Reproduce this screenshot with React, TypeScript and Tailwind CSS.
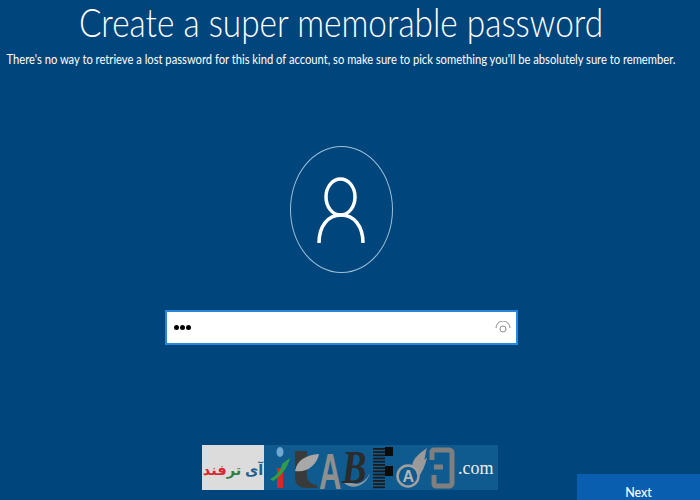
const barcodeRows = [0, 1, 2, 3, 4, 5, 6, 7, 8, 9, 10, 11, 12];

function Logo() {
  return (
    <div className="flex h-[45px] w-[296px] items-stretch bg-[#0f5a8e]">
      <div className="flex w-[62px] shrink-0 items-center justify-center bg-[#dcdcdc] pt-1 font-['Noto_Sans','DejaVu_Sans',sans-serif] text-[14.5px] leading-none font-bold whitespace-nowrap">
        <span dir="rtl">
          <span className="text-[#1f5f8f]">آی </span>
          <span className="text-[#2f7f3f]">تر</span>
          <span className="text-[#d8262c]">فند</span>
        </span>
      </div>
      <svg width="194" height="45" viewBox="0 0 194 45" className="shrink-0">
        {/* person mark */}
        <ellipse cx="16" cy="7" rx="3.5" ry="5" fill="#6fa8d0" />
        <path d="M13 23h6v20h-6z" fill="#d8262c" />
        <path d="M6 34c6-3 11-8 12-15l8-6c-2 9-8 17-17 23z" fill="#2f9e4a" />
        {/* leaf and stem */}
        <path d="M31 6h12v25c0 5 3 8 10 9v3H42c-7 0-11-4-11-11z" fill="#3a3a3a" />
        <path d="M31 26c2-11 11-16 24-17-2 11-12 19-24 17z" fill="#a8a8a8" />
        <text transform="translate(55 44) scale(0.62 1)" fontFamily="Liberation Sans" fontWeight="700" fontSize="50" fill="#8f8f8f">
          A
        </text>
        {/* B with swoosh */}
        <path d="M82 34c8 8 18 6 24-6-3 12-17 18-26 10z" fill="#8f9aa0" />
        <text transform="translate(78 38) scale(0.8 1)" fontFamily="Liberation Serif" fontStyle="italic" fontWeight="700" fontSize="46" fill="#2b2b2b">
          B
        </text>
        {/* barcode */}
        {barcodeRows.map((row) => (
          <rect key={row} x="109" y={3 + row * 3.2} width="12" height="1.8" fill="#1c1c1c" />
        ))}
        <rect x="121" y="2" width="8" height="9" fill="#0c0c0c" />
        <rect x="121" y="21" width="8" height="10" fill="#0c0c0c" />
        {/* flame badge */}
        <path d="M148 21c1-8 8-13 15-18-2 5-1 8-3 12 1-1 2-2 3-2-2 8-5 15-10 21z" fill="#9a9a9a" />
        <circle cx="144" cy="31" r="10.5" fill="#0f5a8e" stroke="#a0a0a0" strokeWidth="2.5" />
        <text x="138.5" y="37" fontFamily="Liberation Sans" fontWeight="700" fontSize="16" fill="#b4b4b4">
          A
        </text>
        {/* rounded box mark */}
        <path d="M168 15V7a2 2 0 0 1 2-2h15a3 3 0 0 1 3 3v30a3 3 0 0 1-3 3h-13a2 2 0 0 1-2-2V30M170 22h9" fill="none" stroke="#7f7f7f" strokeWidth="5" />
      </svg>
      <span className="self-center font-['Liberation_Serif',serif] text-[18px] leading-none text-[#e8eef3]">
        .com
      </span>
    </div>
  );
}

export default function App() {
  return (
    <div className="flex h-[500px] w-[700px] flex-col overflow-hidden bg-[#00457c] font-['Lato',sans-serif] text-white">
      <div className="flex w-[682px] flex-col items-center">
        <h1 className="origin-top scale-y-[1.18] text-[33.4px] leading-[36px] font-light whitespace-nowrap">
          Create a super memorable password
        </h1>
        <p className="mt-[14px] scale-y-[1.15] text-[11.2px] leading-[17px] whitespace-nowrap">
          There's no way to retrieve a lost password for this kind of account,
          so make sure to pick something you'll be absolutely sure to remember.
        </p>

        <div className="mt-[79px] flex h-[127px] w-[103px] shrink-0 items-center justify-center rounded-[50%] border border-[#9fc0d8]">
          <svg width="48" height="66" viewBox="0 0 48 66" fill="none" stroke="white" strokeWidth="3.5">
            <ellipse cx="23.5" cy="20" rx="14.5" ry="18" />
            <path d="M2 66C2 49 11 38 24 38s22 11 22 28" />
          </svg>
        </div>

        <div className="mt-[37px] flex h-[35px] w-[353px] shrink-0 items-center justify-between border-2 border-[#2a87d8] bg-white pr-[5px] pl-[7px]">
          <span className="flex gap-[1px]">
            <span className="size-[5px] rounded-full bg-black" />
            <span className="size-[5px] rounded-full bg-black" />
            <span className="size-[5px] rounded-full bg-black" />
          </span>
          <svg width="16" height="14" viewBox="0 0 16 14" fill="none" stroke="#8c8c8c" strokeWidth="1">
            <path d="M1 7a7 7 0 0 1 14 0" />
            <circle cx="8" cy="8" r="3" />
          </svg>
        </div>
      </div>

      <div className="mt-auto flex w-full items-end">
        <div className="mb-[10px] ml-[202px]">
          <Logo />
        </div>
        <div className="ml-auto flex h-[26px] w-[123px] justify-center bg-[#0a5eaf] pt-[11px] text-[12.5px] leading-[15px] font-medium">
          Next
        </div>
      </div>
    </div>
  );
}
